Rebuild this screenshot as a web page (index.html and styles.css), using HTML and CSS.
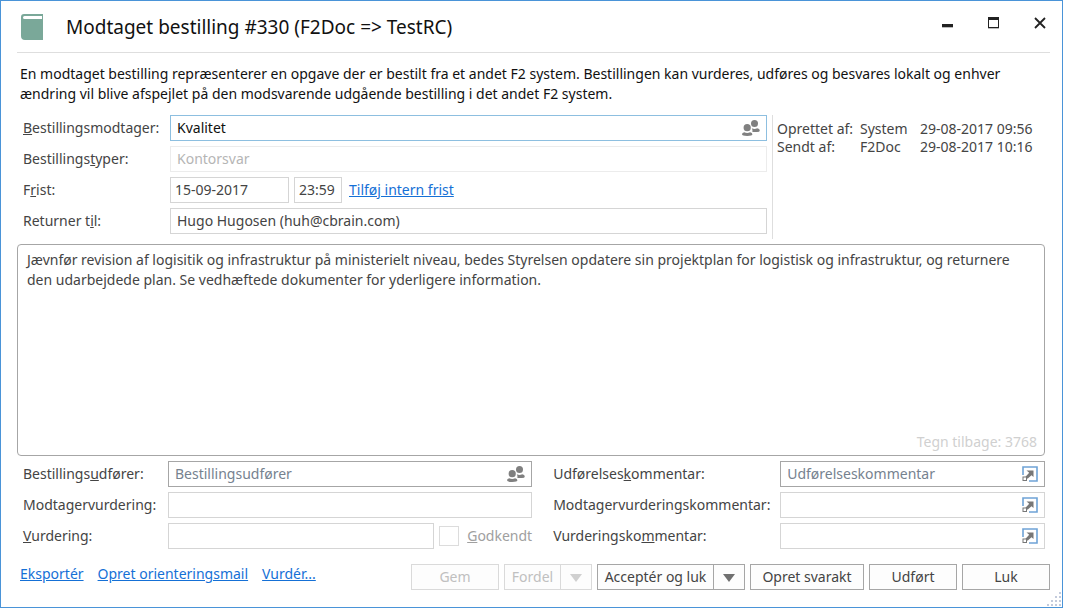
FILE: index.html
```html
<!DOCTYPE html>
<html lang="da">
<head>
  <meta charset="UTF-8">
  <title>Modtaget bestilling #330</title>
  <meta name="viewport" content="width=device-width, initial-scale=1.0">
  <link rel="stylesheet" href="styles.css">
</head>
<body>

  <!-- shared icons -->
  <svg class="icon-defs" aria-hidden="true">
    <symbol id="people" viewBox="0 0 18 16">
      <circle cx="12.5" cy="3.500" r="3.500"/>
      <path d="M9.800 8.300q2.700 1.500 5.400 0 2.600.2 2.600 2.200 0 1.500-2.800 1.500h-4.600q.4-2-.6-3.700z"/>
      <circle cx="5.200" cy="7.700" r="3.600"/>
      <path d="M2.300 12.300q2.900 1.600 5.800 0 2.300.3 2.300 2 0 1.700-5.200 1.700T0 14.300q0-1.700 2.300-2z"/>
    </symbol>
    <symbol id="expand" viewBox="0 0 16 16">
      <path d="M1 9V1h14v14H7" fill="none" stroke="#6fa3d6" stroke-width="1.600"/>
      <path d="M4.500 4.500h7V11L9.500 9.200l-4 3.600-2-2L7.200 6.800z" fill="#777"/>
      <rect x="1" y="11" width="3.500" height="3.500" fill="#fff" stroke="#777"/>
    </symbol>
  </svg>

  <div class="window">
    <header class="titlebar">
      <svg class="book" viewBox="0 0 22 26" aria-hidden="true">
        <path d="M3 0h19v5h-1V2H3.500Q2 2 2 3.500T3.500 5H22v21H4q-4 0-4-4V3q0-3 3-3z" fill="#7aa899"/>
      </svg>
      <h1>Modtaget bestilling #330 (F2Doc =&gt; TestRC)</h1>
      <div class="window-controls">
        <button type="button" aria-label="Minimer">
          <svg viewBox="0 0 12 12"><path d="M0 7h11v3H0z"/><path d="M0 10h11v1H0z" fill="#bbb"/></svg>
        </button>
        <button type="button" aria-label="Maksimer">
          <svg viewBox="0 0 12 12"><path d="M0 0h11v11H0zM1 3v7h9V3z" fill-rule="evenodd"/><path d="M0 11h11v1H0z" fill="#bbb"/></svg>
        </button>
        <button type="button" aria-label="Luk vindue">
          <svg viewBox="0 0 12 12"><path d="M1 1l10 10M11 1L1 11" fill="none" stroke="#222" stroke-width="1.800"/></svg>
        </button>
      </div>
    </header>

    <p class="intro">En modtaget bestilling repræsenterer en opgave der er bestilt fra et andet F2 system. Bestillingen kan vurderes, udføres og besvares lokalt og enhver ændring vil blive afspejlet på den modsvarende udgående bestilling i det andet F2 system.</p>

    <section class="order">
      <div class="order-fields">
        <label for="receiver"><u>B</u>estillingsmodtager:</label>
        <div class="field focused">
          <input type="text" id="receiver" value="Kvalitet">
          <button type="button" class="field-icon" aria-label="Vælg modtager"><svg class="people"><use href="#people"/></svg></button>
        </div>

        <label for="type">Bestillings<u>t</u>yper:</label>
        <div class="field disabled"><input type="text" id="type" value="Kontorsvar" disabled></div>

        <label for="date">F<u>r</u>ist:</label>
        <div class="deadline">
          <div class="field date"><input type="text" id="date" value="15-09-2017"></div>
          <div class="field time"><input type="text" value="23:59" aria-label="Tidspunkt"></div>
          <a href="#">Tilføj intern frist</a>
        </div>

        <label for="return">Returner t<u>i</u>l:</label>
        <div class="field"><input type="text" id="return" value="Hugo Hugosen (huh@cbrain.com)"></div>
      </div>

      <div class="history">
        <table>
          <tr><th scope="row">Oprettet af:</th><td>System</td><td>29-08-2017 09:56</td></tr>
          <tr><th scope="row">Sendt af:</th><td>F2Doc</td><td>29-08-2017 10:16</td></tr>
        </table>
      </div>
    </section>

    <div class="description">
      <textarea aria-label="Beskrivelse" spellcheck="false">Jævnfør revision af logisitik og infrastruktur på ministerielt niveau, bedes Styrelsen opdatere sin projektplan for logistisk og infrastruktur, og returnere den udarbejdede plan. Se vedhæftede dokumenter for yderligere information.</textarea>
      <span class="counter">Tegn tilbage: 3768</span>
    </div>

    <section class="assessment">
      <label for="executor">Bestillings<u>u</u>dfører:</label>
      <div class="field active">
        <input type="text" id="executor" placeholder="Bestillingsudfører">
        <button type="button" class="field-icon" aria-label="Vælg udfører"><svg class="people"><use href="#people"/></svg></button>
      </div>
      <label for="exec-comment" class="second">Udførelses<u>k</u>ommentar:</label>
      <div class="field active">
        <input type="text" id="exec-comment" placeholder="Udførelseskommentar">
        <button type="button" class="field-icon" aria-label="Udvid"><svg class="expand"><use href="#expand"/></svg></button>
      </div>

      <label for="rec-rating">Modtagervurdering:</label>
      <div class="field"><input type="text" id="rec-rating"></div>
      <label for="rec-comment" class="second">Modtagervurderingskommentar:</label>
      <div class="field">
        <input type="text" id="rec-comment">
        <button type="button" class="field-icon" aria-label="Udvid"><svg class="expand"><use href="#expand"/></svg></button>
      </div>

      <label for="rating"><u>V</u>urdering:</label>
      <div class="rating">
        <div class="field"><input type="text" id="rating"></div>
        <input type="checkbox" id="approved" disabled>
        <label for="approved" class="muted"><u>G</u>odkendt</label>
      </div>
      <label for="rating-comment" class="second">Vurderingsko<u>m</u>mentar:</label>
      <div class="field">
        <input type="text" id="rating-comment">
        <button type="button" class="field-icon" aria-label="Udvid"><svg class="expand"><use href="#expand"/></svg></button>
      </div>
    </section>

    <footer>
      <nav>
        <a href="#">Eksportér</a>
        <a href="#">Opret orienteringsmail</a>
        <a href="#">Vurdér...</a>
      </nav>
      <div class="actions">
        <button type="button" class="btn" disabled>Gem</button>
        <div class="split">
          <button type="button" class="btn" disabled>Fordel</button>
          <button type="button" class="btn arrow" aria-label="Flere valg" disabled><svg viewBox="0 0 12 8"><path d="M0 0h12L6 8z"/></svg></button>
        </div>
        <div class="split wide">
          <button type="button" class="btn">Acceptér og luk</button>
          <button type="button" class="btn arrow" aria-label="Flere valg"><svg viewBox="0 0 12 8"><path d="M0 0h12L6 8z"/></svg></button>
        </div>
        <button type="button" class="btn reply">Opret svarakt</button>
        <button type="button" class="btn">Udført</button>
        <button type="button" class="btn">Luk</button>
      </div>
    </footer>

    <svg class="grip" viewBox="0 0 14 14" aria-hidden="true">
      <path d="M12 0h2v2h-2zM12 4h2v2h-2zM12 8h2v2h-2zM12 12h2v2h-2zM8 4h2v2H8zM8 8h2v2H8zM8 12h2v2H8zM4 8h2v2H4zM4 12h2v2H4zM0 12h2v2H0z"/>
    </svg>
  </div>

</body>
</html>
```

FILE: styles.css
```css
:root {
  --text: #444;
  --border: #d5d5d5;
  --border-dark: #a6a6a6;
  --accent: #4a94d8;
  --link: #1570d6;
  --font-main: "Segoe UI", "Noto Sans", "Open Sans", sans-serif;
}

* {
  box-sizing: border-box;
}

body {
  margin: 0;
  padding: 0 4px 4px 0;
  height: 100vh;
  background: #fff;
  color: var(--text);
  font-family: var(--font-main);
  font-size: 14px;
  line-height: 20px;
}

input, button, textarea {
  font: inherit;
  color: inherit;
}

a {
  color: var(--link);
}

.icon-defs {
  display: none;
}

.window {
  position: relative;
  display: flex;
  flex-direction: column;
  height: 100%;
  padding: 0 17px 17px 16px;
  border: 1px solid var(--accent);
}

/* title bar */
.titlebar {
  display: flex;
  align-items: center;
  height: 52px;
  margin-right: -5px;
  padding: 0 4px 0 4px;
  border-bottom: 1px solid #dedede;
}

.book {
  width: 22px;
  height: 26px;
}

.titlebar h1 {
  flex: 1;
  margin: 0 0 0 23px;
  color: #111;
  font-size: 19px;
  font-weight: normal;
}

.window-controls {
  display: flex;
  gap: 34px;
  padding-bottom: 8px;
}

.window-controls button {
  display: flex;
  padding: 0;
  border: 0;
  background: none;
}

.window-controls svg {
  width: 12px;
  height: 12px;
  fill: #222;
}

.intro {
  margin: 11px 0;
  padding: 0 30px 0 3px;
  color: #111;
}

/* order details */
.order {
  display: flex;
  gap: 5px;
}

.order-fields {
  flex: 1;
  display: grid;
  grid-template-columns: 147px 1fr;
  row-gap: 5px;
  align-items: center;
  padding: 0 0 5px 6px;
}

.field {
  display: flex;
  align-items: center;
  height: 26px;
  border: 1px solid var(--border);
  background: #fff;
}

.field input {
  flex: 1;
  min-width: 0;
  height: 24px;
  padding: 0 6px 2px;
  border: 0;
  outline: none;
  background: none;
}

.field input::placeholder {
  color: #76828f;
  opacity: 1;
}

.field.focused {
  border-color: #8dbfe0;
  color: #111;
}

.field.active {
  border-color: var(--border-dark);
}

.field.disabled {
  border-color: #ececec;
  color: #b5b5b5;
}

.field-icon {
  display: flex;
  padding: 0 6px;
  border: 0;
  background: none;
}

.people {
  width: 18px;
  height: 16px;
  fill: #808080;
}

.expand {
  width: 16px;
  height: 16px;
}

.deadline {
  display: flex;
  align-items: center;
  gap: 5px;
}

.deadline a {
  margin-left: 2px;
}

.deadline .field input {
  padding: 0 4px 2px;
}

.date {
  width: 119px;
}

.time {
  width: 48px;
}

.history {
  width: 273px;
  padding: 5px 0 0 4px;
  border-left: 1px solid #dedede;
}

.history table {
  border-collapse: collapse;
  line-height: 18px;
}

.history th, .history td {
  padding: 0;
  font-weight: normal;
  text-align: left;
  white-space: nowrap;
}

.history th {
  width: 83px;
}

.history td:nth-child(2) {
  width: 60px;
}

/* description box */
.description {
  flex: 1;
  display: flex;
  position: relative;
  margin: 5px 0;
}

.description textarea {
  flex: 1;
  padding: 5px 20px 5px 9px;
  border: 1px solid var(--border-dark);
  border-radius: 4px;
  outline: none;
  resize: none;
}

.counter {
  position: absolute;
  right: 8px;
  bottom: 4px;
  color: #d0d0d0;
}

/* assessment fields */
.assessment {
  display: grid;
  grid-template-columns: 145px 11fr auto 8fr;
  row-gap: 5px;
  align-items: center;
  padding-left: 6px;
}

.second {
  width: 248px;
  padding-left: 21px;
}

.rating {
  display: flex;
  align-items: center;
  gap: 5px;
}

.rating .field {
  flex: 1;
}

.rating input[type="checkbox"] {
  appearance: none;
  width: 20px;
  height: 20px;
  margin: 0;
  border: 1px solid #dcdcdc;
}

.muted {
  padding-left: 3px;
  color: #a0a0a0;
}

/* links and buttons */
footer {
  display: flex;
  justify-content: space-between;
  align-items: flex-start;
  margin: 15px -5px 0 3px;
}

nav {
  display: flex;
  gap: 14px;
}

.actions {
  display: flex;
  gap: 5px;
}

.btn {
  width: 88px;
  height: 26px;
  padding: 0;
  border: 1px solid var(--border-dark);
  background: #fdfdfd;
  white-space: nowrap;
}

.btn:disabled {
  border-color: #dadada;
  color: #c0c0c0;
}

.reply {
  width: 114px;
}

.split {
  display: flex;
  width: 88px;
}

.split.wide {
  width: 148px;
}

.split .btn {
  flex: 1;
}

.split .arrow {
  flex: none;
  width: 31px;
  border-left: 0;
}

.arrow svg {
  width: 12px;
  height: 8px;
  fill: #707070;
}

.arrow:disabled svg {
  fill: #d0d0d0;
}

.grip {
  position: absolute;
  right: 1px;
  bottom: 1px;
  width: 14px;
  height: 14px;
  fill: #c3cbdc;
}
```
